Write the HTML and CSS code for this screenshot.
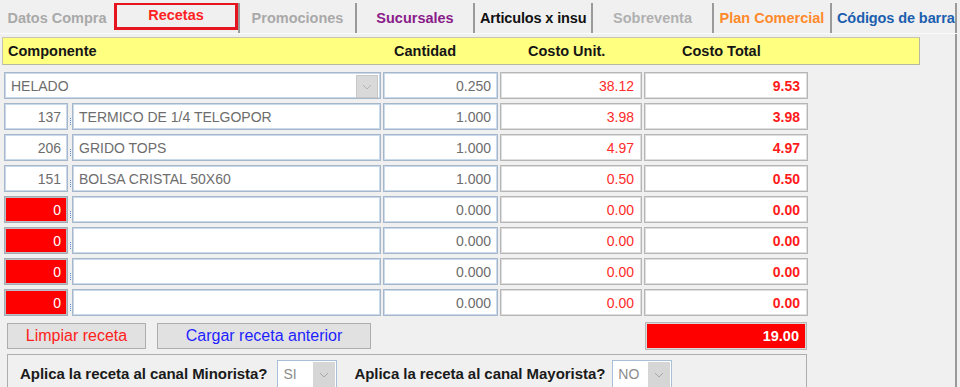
FILE: index.html
```html
<!DOCTYPE html>
<html lang="es">
   <head>
      <title>Recetas</title>
      <link rel="stylesheet" href="styles.css">
   </head>
   <body>
      <div class="window">
      	<div class="tabs">
      		<div class="tab t-datos">Datos Compra</div>
      		<div class="tab t-recetas"><span class="focus">Recetas</span></div>
      		<div class="tab t-promo">Promociones</div>
      		<div class="tab t-sucur">Sucursales</div>
      		<div class="tab t-art clip">Articulos x insu</div>
      		<div class="tab t-sobre">Sobreventa</div>
      		<div class="tab t-plan">Plan Comercial</div>
      		<div class="tab t-cod clip">Códigos de barra</div>
      	</div>

      	<div class="panel">
      		<div class="head">
      			<div class="h-comp">Componente</div>
      			<div class="h-cant">Cantidad</div>
      			<div class="h-unit">Costo Unit.</div>
      			<div class="h-total">Costo Total</div>
      		</div>

      		<div class="rows">
      			<div class="row">
      				<div class="field combo">HELADO
      					<span class="arrow"><svg width="10" height="6" viewBox="0 0 10 6"><polyline points="1,1 5,5 9,1" fill="none" stroke="#b4b4b4" stroke-width="1"/></svg></span>
      				</div>
      				<div class="field num">0.250</div>
      				<div class="field cost num">38.12</div>
      				<div class="field cost total num">9.53</div>
      			</div>
      			<div class="row">
      				<div class="comp">
      					<div class="field num code">137</div><span class="mark"></span>
      					<div class="field desc">TERMICO DE 1/4 TELGOPOR</div>
      				</div>
      				<div class="field num">1.000</div>
      				<div class="field cost num">3.98</div>
      				<div class="field cost total num">3.98</div>
      			</div>
      			<div class="row">
      				<div class="comp">
      					<div class="field num code">206</div><span class="mark"></span>
      					<div class="field desc">GRIDO TOPS</div>
      				</div>
      				<div class="field num">1.000</div>
      				<div class="field cost num">4.97</div>
      				<div class="field cost total num">4.97</div>
      			</div>
      			<div class="row">
      				<div class="comp">
      					<div class="field num code">151</div><span class="mark"></span>
      					<div class="field desc">BOLSA CRISTAL 50X60</div>
      				</div>
      				<div class="field num">1.000</div>
      				<div class="field cost num">0.50</div>
      				<div class="field cost total num">0.50</div>
      			</div>
      			<div class="row">
      				<div class="comp">
      					<div class="field num code empty">0</div><span class="mark"></span>
      					<div class="field desc"></div>
      				</div>
      				<div class="field num">0.000</div>
      				<div class="field cost num">0.00</div>
      				<div class="field cost total num">0.00</div>
      			</div>
      			<div class="row">
      				<div class="comp">
      					<div class="field num code empty">0</div><span class="mark"></span>
      					<div class="field desc"></div>
      				</div>
      				<div class="field num">0.000</div>
      				<div class="field cost num">0.00</div>
      				<div class="field cost total num">0.00</div>
      			</div>
      			<div class="row">
      				<div class="comp">
      					<div class="field num code empty">0</div><span class="mark"></span>
      					<div class="field desc"></div>
      				</div>
      				<div class="field num">0.000</div>
      				<div class="field cost num">0.00</div>
      				<div class="field cost total num">0.00</div>
      			</div>
      			<div class="row">
      				<div class="comp">
      					<div class="field num code empty">0</div><span class="mark"></span>
      					<div class="field desc"></div>
      				</div>
      				<div class="field num">0.000</div>
      				<div class="field cost num">0.00</div>
      				<div class="field cost total num">0.00</div>
      			</div>
      		</div>

      		<div class="actions">
      			<div class="buttons">
      				<button class="btn btn-clear">Limpiar receta</button>
      				<button class="btn btn-load">Cargar receta anterior</button>
      			</div>
      			<div class="sum">19.00</div>
      		</div>

      		<div class="channels">
      			<span class="label">Aplica la receta al canal Minorista?</span>
      			<div class="select">
      				<span class="value">SI</span>
      				<span class="drop"><svg width="10" height="6" viewBox="0 0 10 6"><polyline points="1,1 5,5 9,1" fill="none" stroke="#a8a8a8" stroke-width="1"/></svg></span>
      			</div>
      			<span class="label">Aplica la receta al canal Mayorista?</span>
      			<div class="select second">
      				<span class="value">NO</span>
      				<span class="drop"><svg width="10" height="6" viewBox="0 0 10 6"><polyline points="1,1 5,5 9,1" fill="none" stroke="#a8a8a8" stroke-width="1"/></svg></span>
      			</div>
      		</div>
      	</div>
      </div>
   </body>
</html>
```

FILE: styles.css
```css
body{
	margin:0;
	padding:0;
	height:387px;
	overflow:hidden;
	background:#f0f0f0;
	font-family:"Liberation Sans", Arial, sans-serif;
	font-size:14px;
}
.window{
	width:957px;
}

/* tabs */
.tabs{
	display:flex;
	height:30px;
	padding-top:3px;
	border-bottom:1px solid #fbfbfb;
}
.tab{
	box-sizing:border-box;
	height:30px;
	line-height:31px;
	border-right:2px solid #9a9a9a;
	font-size:14.5px;
	font-weight:bold;
	text-align:center;
	white-space:nowrap;
	overflow:hidden;
}
.tab.clip{
	text-align:left;
	padding-left:5px;
}
.t-datos{ width:114px; border-right:none; color:#a9a9a9; }
.t-recetas{ width:126px; color:#ff1f1f; }
.t-promo{ width:117px; color:#a9a9a9; }
.t-sucur{ width:118px; color:#8a1c8a; }
.t-art{ width:118px; color:#111; letter-spacing:-0.15px; }
.t-sobre{ width:121px; color:#b0b0b0; }
.t-plan{ width:118px; color:#ff8a2b; }
.t-cod{ width:125px; color:#1c5fae; padding-left:3px; letter-spacing:-0.1px; }

.focus{
	display:block;
	box-sizing:border-box;
	height:28px;
	margin-top:-1px;
	line-height:21px;
	border:3px solid #e5141f;
}

/* panel */
.panel{
	height:353px;
	padding:3px 0 0 2px;
	box-sizing:border-box;
	border-right:2px solid #9a9a9a;
}
.head{
	box-sizing:border-box;
	width:918px;
	height:28px;
	background:#ffff80;
	border:1px solid #c6c6b0;
	border-right-color:#b8b8a0;
	border-bottom-color:#b8b8a0;
	display:grid;
	grid-template-columns:377px 115px 142px 164px;
	column-gap:2px;
	padding-left:1px;
	align-items:center;
	font-size:14.5px;
	font-weight:bold;
	color:#151515;
}
.h-comp{ padding-left:4px; }
.h-cant{ padding-left:11px; }
.h-unit{ padding-left:28px; }
.h-total{ padding-left:38px; }

.rows{
	margin-top:7px;
	padding-left:2px;
	display:grid;
	row-gap:4px;
}
.row{
	display:grid;
	grid-template-columns:377px 115px 142px 164px;
	column-gap:2px;
	height:27px;
}
.field{
	box-sizing:border-box;
	height:27px;
	background:#fff;
	border:1px solid #a7b6c8;
	box-shadow:inset 0 0 0 1px #c9daec;
	color:#6d6d6d;
	padding:0 6px;
	display:flex;
	align-items:center;
	white-space:nowrap;
	overflow:hidden;
}
.num{
	justify-content:flex-end;
}
.cost{
	border-color:#b6b6b6;
	box-shadow:inset 0 0 0 1px #dedede;
	color:#ff2b2b;
	padding-right:7px;
}
.total{
	font-weight:bold;
	color:#ff1a1a;
}
.combo{
	position:relative;
}
.arrow{
	position:absolute;
	top:2px;
	right:2px;
	width:20px;
	height:21px;
	background:#d9d9d9;
	border:1px solid #c8c8c8;
	display:flex;
	align-items:center;
	justify-content:center;
}
.comp{
	display:flex;
	align-items:stretch;
}
.code{
	width:64px;
	flex:none;
}
.code.empty{
	background:#ff0000;
	color:#fff;
	border-color:#a6acb4;
	box-shadow:inset 0 0 0 1px #b9bec6;
}
.mark{
	width:4px;
	flex:none;
	display:flex;
	justify-content:center;
}
.mark:after{
	content:'';
	margin-top:15px;
	height:7px;
	border-left:1px dotted #5b8fd6;
}
.desc{
	flex:1;
	padding-left:6px;
}

/* buttons + total */
.actions{
	margin-top:6px;
	padding-left:2px;
	display:grid;
	grid-template-columns:377px 115px 142px 164px;
	column-gap:2px;
	align-items:center;
}
.buttons{
	grid-column:1 / 3;
	display:flex;
	gap:11px;
	padding-left:3px;
}
.btn{
	height:26px;
	background:#e1e1e1;
	border:1px solid #adadad;
	font-family:inherit;
	font-size:16px;
	padding:0;
}
.btn-clear{
	width:139px;
	color:#ff2020;
}
.btn-load{
	width:214px;
	color:#1f1fff;
}
.sum{
	grid-column:4;
	box-sizing:border-box;
	width:162px;
	height:28px;
	margin-left:1px;
	background:#ff0000;
	border:1px solid #b8b8b8;
	box-shadow:inset 0 0 0 1px #d8d8d8;
	color:#fff;
	font-weight:bold;
	font-size:14.5px;
	display:flex;
	align-items:center;
	justify-content:flex-end;
	padding-right:7px;
}

/* channels */
.channels{
	box-sizing:border-box;
	width:800px;
	height:42px;
	margin:4px 0 0 5px;
	border:1px solid #adadad;
	display:flex;
	align-items:flex-start;
	padding:5px 0 0 12px;
}
.label{
	font-size:15px;
	font-weight:bold;
	color:#1a1a1a;
	line-height:27px;
	white-space:nowrap;
	letter-spacing:-0.05px;
}
.select{
	box-sizing:border-box;
	width:60px;
	height:29px;
	margin:0 17px 0 10px;
	border:1px solid #a9bfd9;
	background:#fff;
	display:flex;
}
.select.second{
	margin-left:7px;
}
.value{
	flex:1;
	color:#8c8c8c;
	padding-left:5px;
	line-height:27px;
}
.drop{
	width:22px;
	margin:1px 1px 0 0;
	background:#d6d6d6;
	display:flex;
	align-items:center;
	justify-content:center;
}
```
